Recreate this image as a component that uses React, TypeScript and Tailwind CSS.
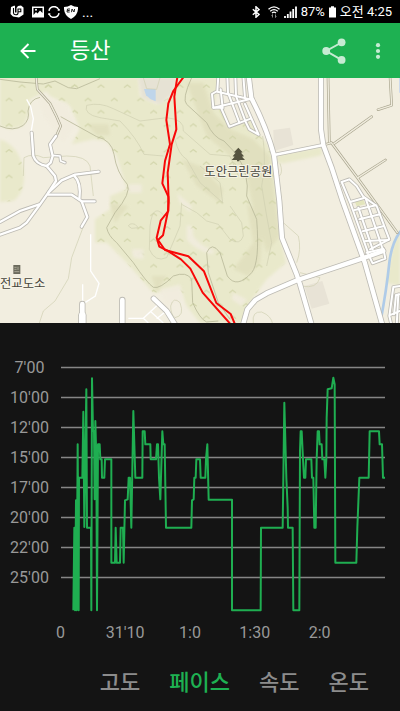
import React, { useState } from 'react';

const paceLevels = ["7'00", "10'00", "12'00", "15'00", "17'00", "20'00", "22'00", "25'00"];
const timeLabels = ["0", "31'10", "1:0", "1:30", "2:0"];
const tabs = ["고도", "페이스", "속도", "온도"];

const paceLine =
    "220,778 223,530 225,778 228,448 230,778 233,280 236,778 237,380 247,380 250,182 253,528 259,115 261,530 273,530 " +
    "274,778 276,82 279,240 282,240 284,445 286,210 289,325 291,778 294,280 299,280 301,325 305,325 306,380 313,380 315,325 " +
    "334,325 334,635 345,635 347,530 350,635 360,635 362,530 369,530 371,635 375,448 383,445 386,380 390,380 394,530 " +
    "400,180 406,380 427,380 428,241 434,241 436,280 451,280 452,325 468,325 471,280 474,280 477,380 481,445 487,241 " +
    "490,280 494,280 498,530 574,530 576,448 581,445 583,380 587,380 589,325 600,325 602,380 616,380 618,325 622,280 " +
    "626,446 696,446 696,778 782,778 783,530 848,530 853,155 859,380 863,470 864,530 878,530 880,778 898,778 900,300 " +
    "902,241 905,241 909,325 912,380 916,380 918,325 934,325 936,380 940,380 943,530 947,530 950,325 953,241 957,241 " +
    "959,280 965,280 967,325 973,325 976,380 979,325 980,200 983,115 995,112 1000,80 1004,100 1006,635 1069,635 " +
    "1072,530 1078,380 1106,380 1109,241 1137,241 1139,280 1146,280 1149,380 1155,380";

const forests = [
    "M0,0 H245 L240,30 150,40 110,60 90,70 84,120 70,150 30,160 0,150 Z",
    "M0,190 Q60,210 72,290 Q75,350 40,375 L0,378 Z",
    "M112,5 H415 L420,60 470,85 515,60 530,5 H655 L650,50 640,95 670,100 690,152 752,128 775,175 800,200 822,240 835,380 840,480 858,560 800,610 770,650 740,700 730,741 H600 L560,690 540,640 460,650 380,560 320,500 285,500 285,430 330,400 330,360 380,340 350,240 320,195 280,190 215,205 240,160 210,90 150,60 Z",
    "M830,236 965,212 965,238 850,262 830,262 Z",
    "M1200,460 1180,500 1158,620 1200,630 Z",
];

// white streets with a grey casing: [path, inner width]
const streets: [string, number][] = [
    ["M95,170 L100,240 Q108,265 140,270 L165,300 168,315 145,350 118,388 80,440 60,455 0,476", 7],
    ["M168,180 L150,205 158,240 152,260 140,270", 7],
    ["M158,238 L180,240 182,255 195,260", 5],
    ["M0,438 L60,405 118,385", 7],
    ["M145,350 L185,313 225,296 296,287", 7],
    ["M222,298 Q245,320 238,370", 7],
    ["M145,356 L215,356 245,376 284,376", 7],
    ["M245,376 L262,423 245,452", 7],
    ["M247,684 V741", 14],
    ["M247,718 V750", 20],
    ["M367,672 V750", 14],
    ["M461,668 L500,705 528,750", 13],
    ["M655,0 L652,45 636,54 640,95 663,95 688,152 752,128", 6],
    ["M682,0 L684,50 718,140", 6],
    ["M706,0 L708,60 735,132", 6],
    ["M730,0 L735,66 M652,47 L750,70 M640,95 L748,70 M662,40 L668,96", 6],
    ["M735,134 L748,160 776,176 735,84", 6],
    ["M1025,318 L1048,310 1070,330 1090,362 1130,390 1168,490 1110,520", 6],
    ["M1025,318 L1050,378 1092,366 M1050,378 L1104,530 M1075,395 L1118,520 M1098,370 L1150,525", 6],
    ["M1064,402 L1128,388 M1078,430 L1140,415 M1088,466 L1152,450 M1097,495 L1165,492", 6],
    ["M1100,530 L1150,518 1156,548 1118,562 1105,535", 6],
    ["M1200,630 L1180,633 1168,720 1175,750 M1200,655 L1188,657 1182,715 M1168,718 L1200,705 M1195,655 L1190,750", 6],
    ["M728,750 L742,700 766,672 800,652 893,612 1085,548 1150,525", 13],
    ["M746,0 L754,66 Q800,155 822,238 L838,375 846,486 890,595 900,625 936,750", 13],
    ["M822,237 L970,207", 8],
    ["M963,0 L963,160 970,208 995,275 1028,376 1062,470 1095,562 1148,750", 13],
];

const lanes = [
    "M108,0 L112,40 150,82 168,118 182,150 168,182",
    "M984,0 L988,197",
    "M978,205 L994,200 1072,305 1192,470",
    "M1002,203 L1115,122",
    "M1075,304 L1156,252",
    "M1170,0 L1175,88 1134,101",
];

const contours = [
    "M0,10 L60,18 130,24 165,15 205,35 230,38 300,8",
    "M0,150 Q40,168 70,148 Q90,130 84,105 Q88,70 120,64",
    "M182,122 L290,182 Q335,192 342,235 Q350,290 382,325 Q395,350 345,410 L320,455 Q325,480 350,500 L400,560 Q440,620 460,634 Q480,640 520,600 Q560,585 575,610 L578,680 Q600,730 620,738 L655,735",
    "M575,5 Q545,70 560,85 L620,140 Q640,185 672,195 L710,235 Q750,300 740,360 L770,430 Q780,560 755,590 Q710,640 682,600 L660,530 Q635,495 620,530 L625,590 655,680 690,730",
];

const faintContours = [
    "M430,5 L440,38 470,40 480,5",
    "M70,300 L72,245 Q100,230 130,245 L200,240 Q260,240 270,270 L280,360",
    "M260,88 Q250,115 300,125 L360,135 Q410,185 432,235 L490,240",
    "M260,88 Q300,78 340,98 L420,135 500,125 Q555,130 550,165 L630,235 690,240 715,300",
    "M525,190 Q535,235 560,250 L600,320 668,380 660,320 600,270",
    "M545,385 L590,410 620,435 655,445 690,490 Q720,510 730,480 L725,440 690,390",
    "M500,430 Q460,370 450,450 L448,520 Q465,560 500,545 L540,450 545,380",
    "M840,262 Q850,290 838,300 M850,440 L895,480 Q905,520 890,560 M900,590 L960,605 Q950,640 905,630",
    "M512,690 Q520,660 540,680 Q555,720 525,725 Q512,715 512,690 Z",
    "M760,741 Q755,705 785,708 Q815,720 818,745",
    "M385,450 Q390,440 405,445 L415,455 395,457 Z",
    "M788,180 Q800,260 785,330 L800,420 815,500 800,570",
    "M250,452 L215,545 205,608 165,675 130,705 118,741",
];

const RouteMap = () => (
    <svg viewBox="0 6 1200 735" className="block w-full bg-[#f2eee0]" role="img" aria-label="등산">
        <defs>
            <pattern id="trees" width="79" height="77" patternUnits="userSpaceOnUse">
                <path d="M56,35 l10,-8 10,8 M17,75 l10,-8 10,8" fill="none" stroke="#d3d6ac" strokeWidth="3.5" />
            </pattern>
            <filter id="soft" x="-10%" y="-10%" width="120%" height="120%">
                <feGaussianBlur stdDeviation="5" />
            </filter>
        </defs>

        {/* Terrain */}
        <g fill="#e9e9cb" filter="url(#soft)">
            {forests.map((d, i) => <path key={i} d={d} />)}
        </g>
        <g fill="#dedcb9" opacity="0.65" filter="url(#soft)">
            <path d="M560,20 L610,20 640,110 690,160 760,190 810,240 825,370 840,480 800,530 760,400 740,300 690,240 620,180 Z" />
            <path d="M262,145 L325,145 330,178 290,178 Z M545,250 L600,270 670,340 660,380 590,330 Z" />
            <path d="M740,380 L790,430 780,560 745,600 700,580 760,500 Z M330,380 L385,390 345,440 Z M455,600 L500,600 470,650 Z" />
        </g>
        {forests.slice(0, 3).map((d, i) => <path key={i} d={d} fill="url(#trees)" />)}
        <g fill="#f1ecde" filter="url(#soft)" opacity="0.9">
            <path d="M115,62 L200,80 225,150 190,200 130,120 Z M385,325 L425,325 425,350 385,350 Z" />
            <path d="M560,450 Q580,440 580,480 Q600,510 645,525 L635,535 Q580,520 560,490 Z M530,350 L575,390 570,410 540,380 Z" />
            <path d="M480,640 L540,625 550,670 500,690 Z M700,650 L740,670 725,690 695,670 Z M395,520 L430,520 430,550 400,545 Z" />
        </g>
        <path d="M415,5 H530 L515,55 480,85 425,65 Z" fill="#e6e2d4" filter="url(#soft)" />
        <path d="M432,39 H467 V76 L452,70 438,58 Z" fill="#bfd5ea" />
        <path d="M820,162 L870,155 880,207 822,225 Z M913,630 L967,615 988,683 935,698 Z" fill="#e8e3d6" />
        <path d="M1064,376 L1090,371 1096,385 1070,391 Z M655,100 L670,98 684,148 668,130 Z" fill="#e3e5bd" />
        <path d="M1202,465 Q1175,500 1168,560 Q1160,640 1140,745" fill="none" stroke="#afcbe8" strokeWidth="8" />
        <path d="M1200,5 V50" stroke="#cdd9ec" strokeWidth="6" />

        <g fill="none" stroke="#b9b99a" strokeWidth="2.5">
            {contours.map((d, i) => <path key={i} d={d} />)}
        </g>
        <g fill="none" stroke="#cfceb0" strokeWidth="2">
            {faintContours.map((d, i) => <path key={i} d={d} />)}
        </g>
        <g fill="none" stroke="#ffffff" strokeWidth="4">
            <path d="M80,70 L92,92 100,128 93,170" />
            <path d="M272,475 V585 L297,622 286,660 255,680 M248,625 V690" />
            <path d="M385,727 H430 L480,680 M430,727 L445,741 M450,705 L490,741 M470,728 L495,708" />
        </g>

        {/* Roads */}
        <g fill="none" strokeLinejoin="round" strokeLinecap="round">
            {lanes.map((d, i) => <path key={i} d={d} stroke="#aaa68f" strokeWidth="8" />)}
            {lanes.map((d, i) => <path key={i} d={d} stroke="#f0ecde" strokeWidth="4" />)}
            {streets.map(([d, w], i) => <path key={i} d={d} stroke="#bdbbb4" strokeWidth={w + 5} />)}
            {streets.map(([d, w], i) => <path key={i} d={d} stroke="#ffffff" strokeWidth={w} />)}
        </g>

        {/* Places */}
        <path d="M715,215 L728,229 723,230 732,241 726,242 735,252 H718 V256 H711 V252 H695 L704,242 698,241 707,230 702,229 Z" fill="#55533f" />
        <path d="M40,567 H61 V594 H40 Z" fill="#6b6a5c" />
        <path d="M43,574 H50 M43,580 H50 M43,587 H58 M54,572 V582" stroke="#c9c6b4" strokeWidth="2" />
        <g
            className="font-['Noto_Sans_CJK_KR',sans-serif] text-[37px]"
            fill="#45443a"
            stroke="#f6f3e6"
            strokeWidth="6"
            paintOrder="stroke"
        >
            <text x="715" y="299" textAnchor="middle">도안근린공원</text>
            <text x="0" y="636">전교도소</text>
        </g>

        {/* Recorded track */}
        <g fill="none" stroke="#f80808" strokeWidth="6" strokeLinejoin="round">
            <path d="M550,4 L520,45 505,82 499,132 510,205 495,255 487,322 505,362 505,405 482,434 470,485 478,512 502,524 543,550 571,578 608,650 692,745" />
            <path d="M532,4 L529,22 523,62 529,160 515,205 503,290 506,375 504,405 489,478 474,492 495,522 565,541 612,586 649,681 692,714 705,745" />
        </g>
    </svg>
);

const StatusBar = () => (
    <div className="flex h-[23px] items-center justify-between bg-black pl-2.5 pr-2 text-white">
        <div className="flex items-center gap-2">
            <svg viewBox="0 0 14 13" className="h-[13px] w-3.5">
                <path d="M1 2 L4 0.800 H5 V7.500 H6.500 V3 L8 1 L11 0.500 L13.500 2.500 V9.500 L9 12.500 L3 11.500 L0.500 9 Z" fill="#fff" />
                <path d="M3.500 3 V8 Q3.700 9.800 5.800 9.800 Q8 9.800 8 8 V4 H10.800 V6.800 H8.500" fill="none" stroke="#000" strokeWidth="1.100" />
            </svg>
            <svg viewBox="0 0 12 12" className="size-3">
                <path d="M0 0.500 H12 V11.500 H0 Z" fill="#fff" />
                <path d="M1.500 2 H10.500 V7 L8 4.500 L5.500 7.500 L4 6 L1.500 9 Z" fill="#000" />
                <circle cx="4" cy="3.800" r="1" fill="#fff" />
            </svg>
            <svg viewBox="0 0 12 12" className="-ml-1 size-3">
                <path d="M1 4.800 A5.100 5.100 0 0 1 10.800 4 M11 7.200 A5.100 5.100 0 0 1 1.200 8" fill="none" stroke="#fff" strokeWidth="1.500" />
                <path d="M9.200 4.800 H11.800 V2.800 Z M2.800 7.200 H0.200 V9.200 Z" fill="#fff" />
            </svg>
            <svg viewBox="0 0 14 14" className="-ml-1 size-3.5">
                <path d="M0 2 Q4 2 7 0 Q10 2 14 2 Q14.500 10 7 14 Q-0.500 10 0 2 Z" fill="#fff" />
                <path d="M6 4 H3.500 L3 7 H5.700 M3.300 5.500 H5.700 M7.500 7.200 L8 4 L10 7 L10.600 4" fill="none" stroke="#222" strokeWidth="1" />
            </svg>
            <span className="-ml-1 text-sm leading-none">...</span>
        </div>
        <div className="flex items-center text-[13px] leading-none">
            <svg viewBox="0 0 8 12" className="h-3 w-2">
                <path d="M0.800 3.300 L7 8.500 L4 11.200 V0.800 L7 3.500 L0.800 8.700" fill="none" stroke="#fff" strokeWidth="1.500" />
            </svg>
            <svg viewBox="0 0 12 12" className="ml-2 size-3">
                <path d="M0.500 3.200 Q6 -1.500 11.500 3.200 M2.200 5.200 Q6 2 9.800 5.200 M4 7 Q6 5.400 8 7" fill="none" stroke="#fff" strokeWidth="1.300" />
                <path d="M4.500 11.500 V8.500 M3.500 9.500 L4.500 8.500 M7.500 8.500 V11.500 L8.500 10.500" fill="none" stroke="#888" strokeWidth="1" />
            </svg>
            <svg viewBox="0 0 13 12" className="ml-1 h-3 w-[13px]">
                <path d="M1 12 V10 M3.800 12 V8 M6.500 12 V5.500 M9.200 12 V3 M12 12 V0.500" stroke="#fff" strokeWidth="1.800" />
            </svg>
            <span className="ml-1">87%</span>
            <svg viewBox="0 0 7 12" className="ml-1 h-3 w-[7px]">
                <path d="M0 1.500 H2 V0.300 H5 V1.500 H7 V11.500 H0 Z" fill="#fff" />
            </svg>
            <span className="ml-1">오전 4:25</span>
        </div>
    </div>
);

const AppBar = () => (
    <header className="flex h-[55px] items-center bg-[#1eb152] pl-4 pr-2.5 text-white">
        <button aria-label="뒤로" className="flex size-6 items-center justify-center">
            <svg viewBox="0 0 16 16" className="size-4">
                <path d="M15.500 8 H1.500 M8.500 1 L1.500 8 L8.500 15" fill="none" stroke="#fff" strokeWidth="1.900" />
            </svg>
        </button>
        <h1 className="ml-[30px] flex-1 text-[22px] leading-none">등산</h1>
        <button aria-label="공유" className="flex items-center justify-center">
            <svg viewBox="0 0 24 26" className="h-[26px] w-6 opacity-75">
                <g fill="#fff">
                    <path d="M19.500 4.500 L4.200 13 L19.500 21.800" fill="none" stroke="#fff" strokeWidth="2" />
                    <circle cx="19.600" cy="4.300" r="3.900" />
                    <circle cx="4.200" cy="13" r="3.900" />
                    <circle cx="19.600" cy="21.900" r="3.900" />
                </g>
            </svg>
        </button>
        <button aria-label="더보기" className="ml-5 flex size-6 items-center justify-center">
            <svg viewBox="0 0 6 16" className="h-4 w-1.5 opacity-75" fill="#fff">
                <circle cx="3" cy="2.200" r="2.100" />
                <circle cx="3" cy="8" r="2.100" />
                <circle cx="3" cy="13.800" r="2.100" />
            </svg>
        </button>
    </header>
);

const PaceChart = () => (
    <section className="pt-[30px] text-base text-[#999999]">
        <div className="flex items-start pr-[15px]">
            <div className="mr-0.5 w-[59px] shrink-0 text-center">
                {paceLevels.map((level) => (
                    <div key={level} className="h-[30px] leading-[30px]">{level}</div>
                ))}
            </div>
            <svg viewBox="183 6 972 786" className="block min-w-0 flex-1">
                {paceLevels.map((level, i) => (
                    <line key={level} x1="183" x2="1155" y1={49.5 + i * 90} y2={49.5 + i * 90} stroke="#868686" strokeWidth="4" />
                ))}
                <polyline points={paceLine} fill="none" stroke="#1fae51" strokeWidth="6" strokeLinejoin="round" />
            </svg>
        </div>
        <div className="mt-2 ml-7 mr-12 grid grid-cols-5 text-center leading-5">
            {timeLabels.map((label) => (
                <span key={label}>{label}</span>
            ))}
        </div>
    </section>
);

const App = () => {
    const [active, setActive] = useState("페이스");

    return (
        <div className="min-h-screen bg-[#141414] font-[Roboto,'Noto_Sans_CJK_KR',sans-serif]">
            <StatusBar />
            <AppBar />
            <RouteMap />
            <PaceChart />
            <nav className="mt-6 flex justify-end gap-[29px] pb-3 pr-[31px]">
                {tabs.map((tab) => (
                    <button
                        key={tab}
                        onClick={() => setActive(tab)}
                        className={`text-[22px] leading-8 font-medium ${active === tab ? "text-[#1eb152]" : "text-[#8c8c8c]"}`}
                    >
                        {tab}
                    </button>
                ))}
            </nav>
        </div>
    );
};

export default App;
